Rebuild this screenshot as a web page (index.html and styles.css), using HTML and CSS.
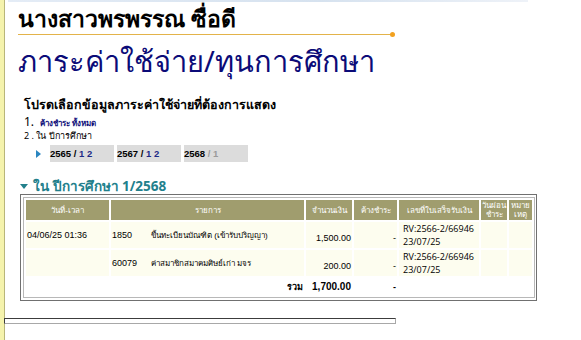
FILE: index.html
```html
<!DOCTYPE html>
<html lang="th">
<head>
    <meta charset="UTF-8">
    <title>ภาระค่าใช้จ่าย/ทุนการศึกษา</title>
    <link rel="stylesheet" href="styles.css">
</head>
<body>

<div class="page">
    <div class="top-fade"></div>

    <div class="content">
        <h2 class="student">นางสาวพรพรรณ ซื่อดี</h2>
        <div class="rule"><span class="dot"></span></div>

        <h1 class="title">ภาระค่าใช้จ่าย/ทุนการศึกษา</h1>

        <div class="choose">
            <h3>โปรดเลือกข้อมูลภาระค่าใช้จ่ายที่ต้องการแสดง</h3>
            <div class="opt1"><span class="num">1.</span> <a href="#">ค้างชำระ ทั้งหมด</a></div>
            <div class="opt2">2 . ใน ปีการศึกษา</div>
            <div class="tabs">
                <span class="arrow"></span>
                <a class="tab" href="#"><b>2565</b> / <span class="sem">1 2</span></a>
                <a class="tab" href="#"><b>2567</b> / <span class="sem">1 2</span></a>
                <a class="tab" href="#"><b>2568</b> <span class="muted">/ 1</span></a>
            </div>
        </div>

        <h4 class="term"><span class="down"></span>ใน ปีการศึกษา 1/2568</h4>

        <div class="box">
            <table class="bills">
                <colgroup>
                    <col style="width:83px">
                    <col style="width:193px">
                    <col style="width:46px">
                    <col style="width:43px">
                    <col style="width:80px">
                    <col style="width:26px">
                    <col style="width:23px">
                </colgroup>
                <thead>
                    <tr>
                        <th>วันที่-เวลา</th>
                        <th>รายการ</th>
                        <th>จำนวนเงิน</th>
                        <th>ค้างชำระ</th>
                        <th>เลขที่ใบเสร็จรับเงิน</th>
                        <th>วันผ่อน ชำระ</th>
                        <th>หมาย เหตุ</th>
                    </tr>
                </thead>
                <tbody>
                    <tr>
                        <td class="date">04/06/25 01:36</td>
                        <td class="item"><span class="code">1850</span>ขึ้นทะเบียนบัณฑิต (เข้ารับปริญญา)</td>
                        <td class="money">1,500.00</td>
                        <td class="owe">-</td>
                        <td class="receipt">RV:2566-2/66946<br>23/07/25</td>
                        <td></td>
                        <td></td>
                    </tr>
                    <tr>
                        <td class="date"></td>
                        <td class="item"><span class="code">60079</span>ค่าสมาชิกสมาคมศิษย์เก่า มจร</td>
                        <td class="money">200.00</td>
                        <td class="owe">-</td>
                        <td class="receipt">RV:2566-2/66946<br>23/07/25</td>
                        <td></td>
                        <td></td>
                    </tr>
                    <tr class="total">
                        <td></td>
                        <td class="sum-label">รวม</td>
                        <td class="money">1,700.00</td>
                        <td class="owe">-</td>
                        <td></td>
                        <td></td>
                        <td></td>
                    </tr>
                </tbody>
            </table>
        </div>
    </div>

    <div class="bottom-bar"></div>
</div>

</body>
</html>
```

FILE: styles.css
```css
body {
    margin: 0;
    padding: 0;
    background: #fff;
    font-family: "Noto Sans", "DejaVu Sans", sans-serif;
    color: #000;
}
.page {
    height: 340px;
    border-left: 4px solid #f5f3ad;
    box-shadow: inset 1px 0 0 #b9b67a;
    overflow: hidden;
}
.top-fade {
    height: 2px;
    width: 520px;
    margin-left: 4px;
    background: linear-gradient(90deg, #e4ecf6, #d6e2ef 60%, #eef2f8);
}
.content {
    padding-left: 14px;
}
.student {
    margin: 4px 0 0;
    font-size: 23px;
    line-height: 25px;
    font-weight: bold;
}
.rule {
    position: relative;
    width: 374px;
    height: 1px;
    margin-top: 3px;
    background: #e3b34a;
}
.dot {
    position: absolute;
    right: -3px;
    top: -2px;
    width: 5px;
    height: 5px;
    border-radius: 50%;
    background: #f2a11f;
}
.title {
    margin: 6px 0 0;
    font-size: 29px;
    line-height: 40px;
    font-weight: normal;
    color: #0b0b78;
}
.choose {
    padding-left: 6px;
    margin-top: 16px;
}
.choose h3 {
    margin: 0;
    font-size: 12.5px;
    line-height: 16px;
    font-weight: bold;
}
.opt1 {
    margin-top: 1px;
    font-size: 12px;
    line-height: 15px;
}
.opt1 a {
    font-size: 8px;
    font-weight: bold;
    color: #10107a;
    text-decoration: none;
    margin-left: 3px;
}
.opt2 {
    font-size: 9px;
    line-height: 12px;
}
.tabs {
    display: flex;
    align-items: center;
    gap: 3px;
    margin-top: 3px;
    padding-left: 12px;
}
.arrow {
    width: 0;
    height: 0;
    border-top: 4px solid transparent;
    border-bottom: 4px solid transparent;
    border-left: 5px solid #2a86c0;
    margin-right: 6px;
}
.tab {
    width: 64px;
    height: 17px;
    line-height: 17px;
    background: #dcdcdc;
    font-family: "Liberation Sans", Arial, sans-serif;
    font-size: 9.5px;
    color: #000;
    text-decoration: none;
    font-weight: bold;
}
.tab .sem {
    color: #1c2a86;
}
.tab .muted {
    color: #9a9a9a;
}
.term {
    display: flex;
    align-items: center;
    gap: 5px;
    margin: 16px 0 0;
    padding-left: 2px;
    font-size: 13.5px;
    line-height: 16px;
    font-weight: bold;
    color: #22808c;
}
.down {
    width: 0;
    height: 0;
    border-left: 4px solid transparent;
    border-right: 4px solid transparent;
    border-top: 5px solid #22808c;
}
.box {
    width: 511px;
    margin-top: 0;
    margin-left: 2px;
    border: 1px solid #707070;
    padding: 2px;
}
.bills {
    width: 100%;
    table-layout: fixed;
    border: 1px solid #b8b8b8;
    border-spacing: 2px;
    font-family: "Liberation Sans", Arial, sans-serif;
    font-size: 9px;
}
.bills th {
    background: #a09d6e;
    color: #fff;
    font-weight: normal;
    font-size: 8px;
    line-height: 9px;
    height: 20px;
    padding: 0 1px;
    text-align: center;
}
.bills td {
    padding: 0 1px;
    vertical-align: middle;
}
.bills tbody tr {
    background: #fdfdef;
    height: 26px;
}
.bills tbody tr.total {
    background: #fff;
    height: 17px;
    font-weight: bold;
}
.item {
    font-size: 8px;
}
.code {
    display: inline-block;
    width: 39px;
    font-size: 9px;
}
.money {
    text-align: right;
    padding-top: 6px !important;
}
.total .money {
    padding-top: 0 !important;
    font-size: 10px;
}
.owe {
    text-align: right;
    padding-top: 6px !important;
}
.total .owe {
    padding-top: 0 !important;
}
.receipt {
    font-family: "Open Sans", sans-serif;
    font-size: 9px;
    line-height: 13px;
    padding-left: 4px !important;
}
.sum-label {
    text-align: right;
    font-size: 9px;
}
.bottom-bar {
    width: 390px;
    height: 4px;
    margin-top: 17px;
    border-top: 1px solid #3c3c3c;
    border-left: 1px solid #3c3c3c;
    border-bottom: 1px solid #a8a8a8;
    border-right: 1px solid #a8a8a8;
}
```
